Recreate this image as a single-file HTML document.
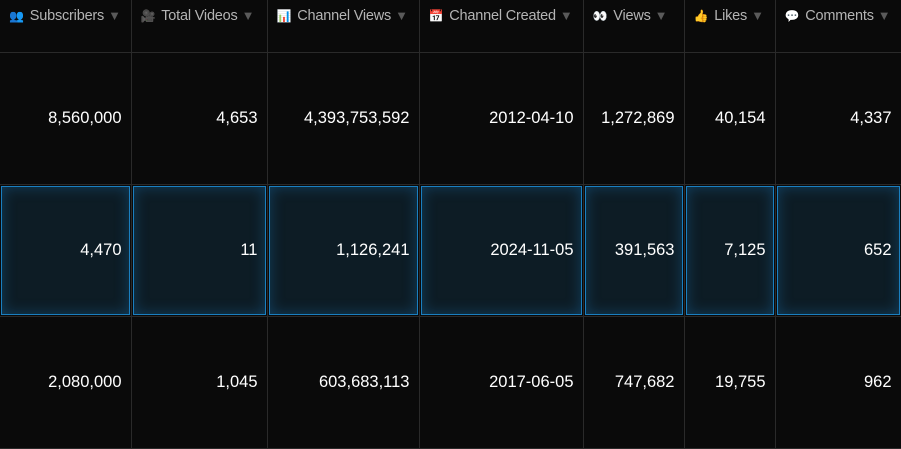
<!DOCTYPE html><html><head><style>
body{margin:0;background:#0a0a0a;width:901px;height:438px;overflow:hidden;font-family:"Liberation Sans",sans-serif}
table{border-collapse:collapse;table-layout:fixed;width:901px}
td,th{border-right:1px solid #2a2a2a;border-bottom:1px solid #2a2a2a;padding:0 9px 0 0;text-align:right;color:#fff;font-size:16.5px;font-weight:normal}
th{height:52px;vertical-align:top;text-align:left;padding:8px 0 0 9px;color:#b4b4b4;font-size:14.5px;white-space:nowrap;box-sizing:border-box;letter-spacing:-0.2px}
th .a{color:#5a5a5a;font-size:13px;margin-left:4px}
td{height:131px}
tr.h td{position:relative}
tr.h td::before{content:"";position:absolute;left:1px;right:1px;top:1px;bottom:1px;border:1px solid #1a7fc0;background:#0d1c25;box-shadow:inset 0 0 14px rgba(30,130,200,.35)}
tr.h td span{position:relative}
.i{font-size:12px;margin-right:6px}
</style></head><body><table>
<colgroup><col style="width:131px"><col style="width:136px"><col style="width:152px"><col style="width:164px"><col style="width:101px"><col style="width:91px"><col style="width:126px"></colgroup>
<tr><th><span class="i">👥</span>Subscribers<span class="a">▼</span></th><th><span class="i">🎥</span>Total Videos<span class="a">▼</span></th><th><span class="i">📊</span>Channel Views<span class="a">▼</span></th><th><span class="i">📅</span>Channel Created<span class="a">▼</span></th><th><span class="i">👀</span>Views<span class="a">▼</span></th><th><span class="i">👍</span>Likes<span class="a">▼</span></th><th><span class="i">💬</span>Comments<span class="a">▼</span></th></tr>
<tr><td>8,560,000</td><td>4,653</td><td>4,393,753,592</td><td>2012-04-10</td><td>1,272,869</td><td>40,154</td><td>4,337</td></tr>
<tr class="h"><td><span>4,470</span></td><td><span>11</span></td><td><span>1,126,241</span></td><td><span>2024-11-05</span></td><td><span>391,563</span></td><td><span>7,125</span></td><td><span>652</span></td></tr>
<tr><td>2,080,000</td><td>1,045</td><td>603,683,113</td><td>2017-06-05</td><td>747,682</td><td>19,755</td><td>962</td></tr>
</table></body></html>
